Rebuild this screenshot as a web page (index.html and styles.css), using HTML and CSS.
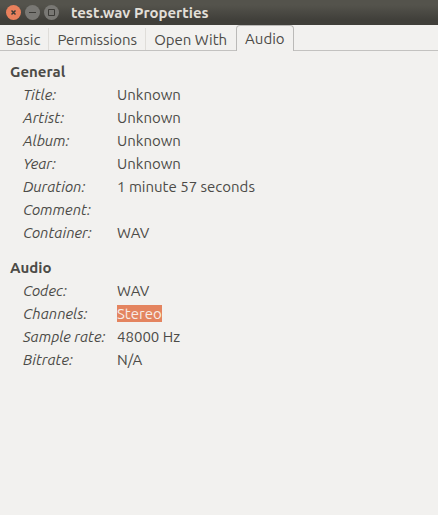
FILE: index.html
```html
<!DOCTYPE html>
<html lang="en">
<head>
<meta charset="utf-8">
<meta name="viewport" content="width=device-width, initial-scale=1">
<title>test.wav Properties</title>
<link rel="stylesheet" href="styles.css">
</head>
<body>
<header class="titlebar">
  <div class="controls">
    <button class="control close" type="button" aria-label="Close">
      <svg viewBox="0 0 16 16"><circle class="disc" cx="7.500" cy="7.500" r="7.500"/><path class="mark" d="M5.500 5.500l4 4M9.500 5.500l-4 4"/></svg>
    </button>
    <button class="control" type="button" aria-label="Minimize">
      <svg viewBox="0 0 16 16"><circle class="disc" cx="7.500" cy="7.500" r="7.500"/><path class="mark" d="M4 7.500h7"/></svg>
    </button>
    <button class="control" type="button" aria-label="Maximize">
      <svg viewBox="0 0 16 16"><circle class="disc" cx="7.500" cy="7.500" r="7.500"/><path class="mark" d="M4.500 4.500h6v6h-6z"/></svg>
    </button>
  </div>
  <h1 class="title">test.wav Properties</h1>
</header>
<nav class="tabs" role="tablist">
  <button class="tab" type="button" role="tab">Basic</button>
  <button class="tab" type="button" role="tab">Permissions</button>
  <button class="tab" type="button" role="tab">Open With</button>
  <button class="tab active" type="button" role="tab" aria-selected="true">Audio</button>
</nav>
<main class="panel">
  <section>
    <h2 class="heading">General</h2>
    <dl class="properties">
      <dt>Title:</dt><dd>Unknown</dd>
      <dt>Artist:</dt><dd>Unknown</dd>
      <dt>Album:</dt><dd>Unknown</dd>
      <dt>Year:</dt><dd>Unknown</dd>
      <dt>Duration:</dt><dd>1 minute 57 seconds</dd>
      <dt>Comment:</dt><dd></dd>
      <dt>Container:</dt><dd>WAV</dd>
    </dl>
  </section>
  <section>
    <h2 class="heading">Audio</h2>
    <dl class="properties">
      <dt>Codec:</dt><dd>WAV</dd>
      <dt>Channels:</dt><dd><mark class="selected">Stereo</mark></dd>
      <dt>Sample rate:</dt><dd>48000 Hz</dd>
      <dt>Bitrate:</dt><dd>N/A</dd>
    </dl>
  </section>
</main>
</body>
</html>
```
FILE: styles.css
```css
* {
  box-sizing: border-box;
}

body {
  margin: 0;
  min-height: 100vh;
  background: #f2f1ef;
  color: #4c4b47;
  font: 15px/23px Ubuntu, "Noto Sans", sans-serif;
}

.titlebar {
  display: flex;
  align-items: center;
  gap: 11px;
  height: 25px;
  padding: 0 6px;
  background: linear-gradient(#54534c, #54534c 20%, #403f3a 80%);
}

.controls {
  display: flex;
  gap: 3px;
}

.control {
  width: 16px;
  height: 16px;
  padding: 0;
  border: 0;
  background: none;
}

.control svg {
  display: block;
}

.disc {
  fill: #797874;
}

.close .disc {
  fill: #e9805c;
}

.mark {
  fill: none;
  stroke: #3c3b37;
}

.close .mark {
  stroke-width: 1.5;
}

.title {
  margin: 0;
  color: #e2dfd8;
  font-size: 15px;
  font-weight: 700;
}

.tabs {
  display: flex;
  height: 26px;
  border-bottom: 1px solid #c3c2c0;
}

.tab {
  margin: 3px 0 0;
  padding: 0 8px;
  border: 0;
  border-right: 1px solid #dfddd9;
  background: none;
  color: inherit;
  font: inherit;
}

.tab:first-child {
  padding-left: 6px;
}

.tab:nth-last-child(2) {
  padding-right: 9px;
  border-right: 0;
}

.active {
  margin: 0 0 -1px;
  border: 1px solid #bbbab8;
  border-bottom: 0;
  border-radius: 4px 4px 0 0;
  background: #f2f1ef;
}

.panel {
  display: grid;
  gap: 12px;
  padding: 9px 10px;
}

.heading {
  margin: 0;
  font-size: 15px;
  line-height: 23px;
}

.properties {
  display: grid;
  grid-template-columns: 94px 1fr;
  grid-auto-rows: 23px;
  margin: 0;
  padding-left: 13px;
  white-space: nowrap;
}

dt {
  font-style: italic;
}

dd {
  margin: 0;
}

.selected {
  display: inline-block;
  background: #e4845f;
  color: #f7ece7;
  line-height: 17px;
}
```
